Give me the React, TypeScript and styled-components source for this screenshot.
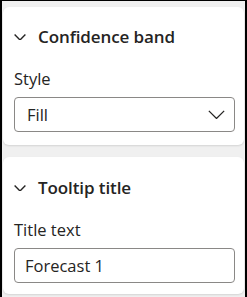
import React from "react";
import styled, { createGlobalStyle } from "styled-components";

const GlobalStyle = createGlobalStyle`
  html, body {
    margin: 0;
    padding: 0;
    background: #ffffff;
  }
  body {
    font-family: "Open Sans", "Noto Sans", sans-serif;
    color: #252423;
  }
`;

const Frame = styled.div`
  width: 247px;
  height: 297px;
  box-sizing: border-box;
  border-top: 1px solid #000;
  border-left: 2px solid #000;
  border-right: 2px solid #000;
  background: #f0f0f0;
  padding: 6px 1px 0 1px;
  display: flex;
  flex-direction: column;
  gap: 12px;
  overflow: hidden;
`;

const Card = styled.section<{ $bottom: number; $top: number }>`
  background: #ffffff;
  border-radius: 6px;
  box-shadow: 0 1px 2px rgba(0, 0, 0, 0.12);
  padding: ${(p) => p.$top}px 9px ${(p) => p.$bottom}px 11px;
`;

const Header = styled.div`
  display: flex;
  align-items: center;
  gap: 12px;
  height: 24px;
  margin-bottom: 20px;
`;

const Title = styled.h3`
  margin: 0;
  font-size: 17px;
  font-weight: 600;
  letter-spacing: -0.1px;
  line-height: 24px;
`;

const Label = styled.div`
  font-size: 16.5px;
  line-height: 20px;
  margin-bottom: 8px;
`;

const Box = styled.div`
  height: 35px;
  box-sizing: border-box;
  border: 1px solid #8a8886;
  border-radius: 4px;
  display: flex;
  align-items: center;
  justify-content: space-between;
  padding: 0 9px 0 12px;
  font-size: 16.5px;
`;

const InputBox = styled(Box)`
  padding-left: 10px;
`;

const Chevron = ({ w = 12, stroke = 1.4 }: { w?: number; stroke?: number }) => (
  <svg width={w} height={w * 0.55} viewBox="0 0 12 6.6" fill="none">
    <path d="M0.6 0.6 L6 6 L11.4 0.6" stroke="#252423" strokeWidth={stroke} />
  </svg>
);

const Section = ({
  title,
  label,
  children,
  top,
  bottom,
}: {
  title: string;
  label: string;
  children: React.ReactNode;
  top: number;
  bottom: number;
}) => (
  <Card $top={top} $bottom={bottom}>
    <Header>
      <Chevron />
      <Title>{title}</Title>
    </Header>
    <Label>{label}</Label>
    {children}
  </Card>
);

export default function App() {
  return (
    <>
      <GlobalStyle />
      <Frame>
        <Section title="Confidence band" label="Style" top={18} bottom={13}>
          <Box>
            <span>Fill</span>
            <Chevron w={17} stroke={0.9} />
          </Box>
        </Section>
        <Section title="Tooltip title" label="Title text" top={19} bottom={11}>
          <InputBox>
            <span>Forecast 1</span>
          </InputBox>
        </Section>
      </Frame>
    </>
  );
}
